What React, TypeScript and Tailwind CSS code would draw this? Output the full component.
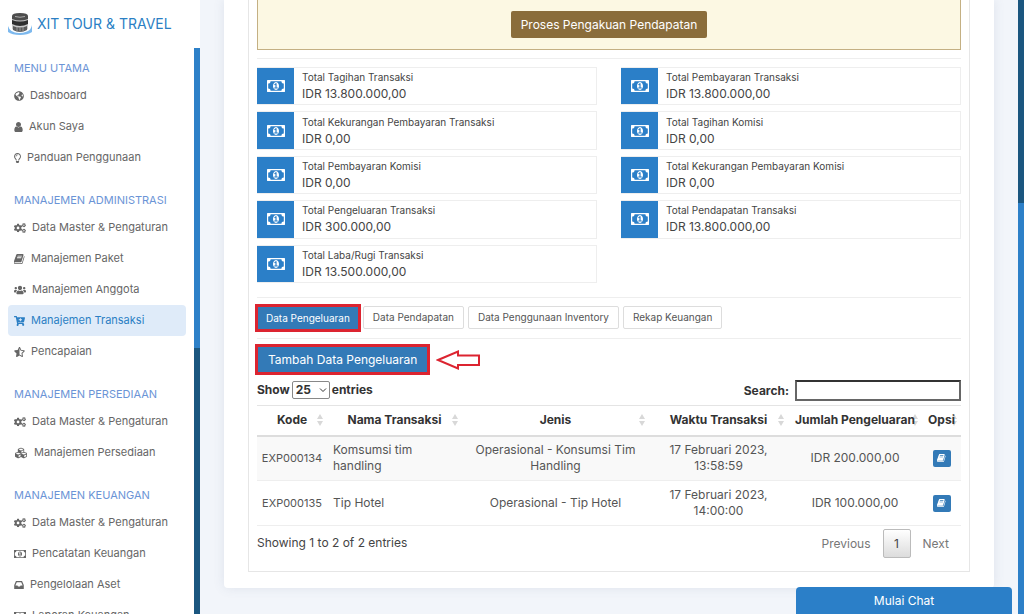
import type { ReactNode } from "react";
import {
  FaCartPlus,
  FaCogs,
  FaCubes,
  FaGlobeAmericas,
  FaRegLightbulb,
  FaStarHalfAlt,
  FaUsers,
} from "react-icons/fa";

function BookIcon({ className }: { className: string }) {
  return (
    <svg viewBox="100 128 1580 1536" fill="currentColor" className={className} aria-hidden="true">
      <path d="M1639 478q40 57 18 129l-275 906q-19 64-76.5 107.5t-122.5 43.5h-923q-77 0-148.5-53.5t-99.5-131.5q-24-67-2-127 0-4 3-27t4-37q1-8-3-21.5t-3-19.5q2-11 8-21t16.5-23.5 16.5-23.5q23-38 45-91.5t30-91.5q3-10 .5-30t-.5-28q3-11 17-28t17-23q21-36 42-92t25-90q1-9-2.500-32t.5-28q4-13 22-30.500t22-22.500q19-26 42.500-84.500t27.500-96.500q1-8-3-25.500t-2-26.500q2-8 9-18t18-23 17-21q8-12 16.500-30.500t15-35 16-36 19.500-32 26.500-23.500 36-11.500 47.500 5.500l-1 3q38-9 51-9h761q74 0 114 56t18 130l-274 906q-36 119-71.500 153.500t-128.500 34.500h-869q-27 0-38 15-11 16-1 43 24 70 144 70h923q29 0 56-15.500t35-41.500l300-987q7-22 5-57 38 15 59 43zm-1064 2q-4 13 2 22.500t20 9.500h608q13 0 25.500-9.500t16.500-22.500l21-64q4-13-2-22.500t-20-9.500h-608q-13 0-25.500 9.500t-16.500 22.500zm-83 256q-4 13 2 22.500t20 9.500h608q13 0 25.500-9.500t16.500-22.500l21-64q4-13-2-22.500t-20-9.500h-608q-13 0-25.500 9.500t-16.500 22.500z" />
    </svg>
  );
}

function UserIcon({ className }: { className: string }) {
  return (
    <svg viewBox="256 128 1280 1536" fill="currentColor" className={className} aria-hidden="true">
      <path d="M1536 1399q0 109-62.5 187t-150.5 78h-854q-88 0-150.5-78t-62.5-187q0-85 8.5-160.5t31.5-152 58.5-131 94-89 134.5-34.5q131 128 313 128t313-128q76 0 134.5 34.5t94 89 58.5 131 31.5 152 8.5 160.5zm-256-887q0 159-112.5 271.5t-271.5 112.5-271.5-112.5-112.5-271.5 112.5-271.5 271.5-112.5 271.5 112.5 112.5 271.5z" />
    </svg>
  );
}

function MoneyIcon({ className }: { className: string }) {
  return (
    <svg viewBox="0 256 1920 1280" fill="currentColor" className={className} aria-hidden="true">
      <path d="M768 1152h384v-96h-128v-448h-114l-148 137 77 80q42-37 55-57h2v288h-128v96zm512-256q0 70-21 142t-59.5 134-101.5 101-138 39-138-39-101.5-101-59.5-134-21-142 21-142 59.5-134 101.5-101 138-39 138 39 101.5 101 59.5 134 21 142zm512 256v-512q-106 0-181-75t-75-181h-1152q0 106-75 181t-181 75v512q106 0 181 75t75 181h1152q0-106 75-181t181-75zm128-832v1152q0 26-19 45t-45 19h-1792q-26 0-45-19t-19-45v-1152q0-26 19-45t45-19h1792q26 0 45 19t19 45z" />
    </svg>
  );
}

function InboxIcon({ className }: { className: string }) {
  return (
    <svg viewBox="128 256 1536 1280" fill="currentColor" className={className} aria-hidden="true">
      <path d="M1151 960h316q-1-3-2.5-8.5t-2.5-7.5l-212-496h-708l-212 496q-1 3-2.5 8.5t-2.5 7.5h316l95 192h320zm513 30v482q0 26-19 45t-45 19h-1408q-26 0-45-19t-19-45v-482q0-62 25-123l238-552q10-25 36.5-42t52.5-17h832q26 0 52.5 17t36.5 42l238 552q25 61 25 123z" />
    </svg>
  );
}

function Logo() {
  return (
    <svg viewBox="0 0 24 24" className="size-6 shrink-0" aria-hidden="true">
      <path d="M0 14v6q4 3 12 3t12-3v-7q-1 5-5 6.500t-8 1.500q-9 0-11-7z" fill="#7db9ee" />
      <path d="M4 4h16v13q-8 5-16 0z" fill="#c9c9c9" />
      <path d="M4 4q0-3 8-3t8 3v3q-8 3-16 0z" fill="#4d4d4d" />
      <path d="M7 4.500q5 1.500 10 0" stroke="#aaa" fill="none" />
      <path d="M4 8q8 3 16 0v4q-8 4-16 0z" fill="#2f2f2f" />
      <path d="M5 14q7 3 14 0v4q-7 4-14 0z" fill="#5c5c5c" />
      <path d="M9 15v4M12 15.500v4M15 15v4" stroke="#aaa" strokeWidth="0.800" />
    </svg>
  );
}

type Item = { label: string; icon: ReactNode; active?: boolean };

const menu: { title: string; items: Item[] }[] = [
  {
    title: "MENU UTAMA",
    items: [
      { label: "Dashboard", icon: <FaGlobeAmericas className="size-2.5" /> },
      { label: "Akun Saya", icon: <UserIcon className="h-2.5 w-[9px]" /> },
      { label: "Panduan Penggunaan", icon: <FaRegLightbulb className="h-2.5 w-[7px]" /> },
    ],
  },
  {
    title: "MANAJEMEN ADMINISTRASI",
    items: [
      { label: "Data Master & Pengaturan", icon: <FaCogs className="size-3" /> },
      { label: "Manajemen Paket", icon: <BookIcon className="h-2.5 w-[11px]" /> },
      { label: "Manajemen Anggota", icon: <FaUsers className="size-3" /> },
      { label: "Manajemen Transaksi", icon: <FaCartPlus className="h-2.5 w-[11px]" />, active: true },
      { label: "Pencapaian", icon: <FaStarHalfAlt className="h-2.5 w-[11px]" /> },
    ],
  },
  {
    title: "MANAJEMEN PERSEDIAAN",
    items: [
      { label: "Data Master & Pengaturan", icon: <FaCogs className="size-3" /> },
      { label: "Manajemen Persediaan", icon: <FaCubes className="h-3 w-3.5" /> },
    ],
  },
  {
    title: "MANAJEMEN KEUANGAN",
    items: [
      { label: "Data Master & Pengaturan", icon: <FaCogs className="size-3" /> },
      { label: "Pencatatan Keuangan", icon: <MoneyIcon className="h-2 w-3" /> },
      { label: "Pengelolaan Aset", icon: <InboxIcon className="h-2 w-2.5" /> },
      { label: "Laporan Keuangan", icon: <MoneyIcon className="h-2 w-3" /> },
    ],
  },
];

const totals = [
  ["Total Tagihan Transaksi", "IDR 13.800.000,00"],
  ["Total Pembayaran Transaksi", "IDR 13.800.000,00"],
  ["Total Kekurangan Pembayaran Transaksi", "IDR 0,00"],
  ["Total Tagihan Komisi", "IDR 0,00"],
  ["Total Pembayaran Komisi", "IDR 0,00"],
  ["Total Kekurangan Pembayaran Komisi", "IDR 0,00"],
  ["Total Pengeluaran Transaksi", "IDR 300.000,00"],
  ["Total Pendapatan Transaksi", "IDR 13.800.000,00"],
  ["Total Laba/Rugi Transaksi", "IDR 13.500.000,00"],
];

const columns = [
  { label: "Kode", width: "w-[70px]" },
  { label: "Nama Transaksi", width: "w-[135px]" },
  { label: "Jenis", width: "" },
  { label: "Waktu Transaksi", width: "w-[139px]" },
  { label: "Jumlah Pengeluaran", width: "w-[134px]" },
  { label: "Opsi", width: "w-[39px]" },
];

const rows = [
  ["EXP000134", "Komsumsi tim handling", "Operasional - Konsumsi Tim Handling", "17 Februari 2023, 13:58:59", "IDR 200.000,00"],
  ["EXP000135", "Tip Hotel", "Operasional - Tip Hotel", "17 Februari 2023, 14:00:00", "IDR 100.000,00"],
];

function SortIcon() {
  return (
    <svg viewBox="0 0 6 12" className="absolute top-2 right-1 h-3 w-1.5" fill="#d8d8d8" aria-hidden="true">
      <path d="M3 0l3 5H0zM3 12l3-5H0z" />
    </svg>
  );
}

function Sidebar() {
  return (
    <aside className="flex h-full w-50 shrink-0 flex-col overflow-hidden bg-white">
      <a href="#" className="flex h-12 shrink-0 items-center gap-[5px] px-2 text-sm whitespace-nowrap text-[#2b7fc4]">
        <Logo />
        XIT TOUR & TRAVEL
      </a>
      <div className="flex min-h-0 flex-1">
        <nav className="min-w-0 flex-1 overflow-hidden px-2 pt-2 text-[11px] whitespace-nowrap text-[#666]">
          {menu.map((group) => (
            <section key={group.title} className="mb-[15px]">
              <h2 className="h-6 px-1.5 leading-6 text-[#6b94d6]">{group.title}</h2>
              {group.items.map((item) => (
                <a
                  key={item.label}
                  href="#"
                  className={
                    item.active
                      ? "flex h-[31px] items-center gap-1.5 rounded bg-[#dfebf9] px-1.5 text-[#2b7fc4]"
                      : "flex h-[31px] items-center gap-1.5 px-1.5"
                  }
                >
                  {item.icon}
                  {item.label}
                </a>
              ))}
            </section>
          ))}
        </nav>
        <div className="flex w-1.5 flex-col bg-[#1b567f]">
          <div className="h-[53%] bg-[#2d80c8]" />
        </div>
      </div>
    </aside>
  );
}

function DataTable() {
  return (
    <table className="w-full table-fixed border-collapse border-y border-[#e4e4e4] text-xs text-[#555]">
      <thead>
        <tr className="h-[30px] border-b-2 border-[#ddd] text-[#333]">
          {columns.map((c) => (
            <th key={c.label} scope="col" className={`relative p-0 font-bold whitespace-nowrap ${c.width}`}>
              <SortIcon />
              <span className="relative">{c.label}</span>
            </th>
          ))}
        </tr>
      </thead>
      <tbody>
        {rows.map(([kode, nama, jenis, waktu, jumlah]) => (
          <tr key={kode} className="h-[45px] border-b border-[#eee] text-center leading-4 odd:bg-[#f9f9f9]">
            <td className="text-[11px]">{kode}</td>
            <td className="pr-8 pl-1.5 text-left">{nama}</td>
            <td className="px-2">{jenis}</td>
            <td className="px-4">{waktu}</td>
            <td>{jumlah}</td>
            <td>
              <button type="button" aria-label={`Detail ${kode}`} className="inline-flex h-[17px] w-[18px] items-center justify-center rounded-xs bg-[#337ab7] align-middle text-white">
                <BookIcon className="h-2 w-[9px]" />
              </button>
            </td>
          </tr>
        ))}
      </tbody>
    </table>
  );
}

const tabClass = "h-[23px] rounded-xs border border-[#ddd] bg-white px-[9px] text-[10px] text-[#555]";

export default function App() {
  return (
    <div className="relative flex h-screen overflow-hidden bg-[#f2f5fa] font-['Inter',sans-serif] text-[#444]">
      <Sidebar />
      <main className="min-w-0 flex-1 overflow-hidden px-6">
        <div className="rounded-b bg-white px-6 pb-4 shadow-[0_0_12px_rgba(80,100,130,0.12)]">
          <div className="border-x border-b border-[#e6e6e6] px-2">
            <div className="flex justify-center border-x border-b border-[#c4b083] bg-[#fcf8e3] pt-[11px] pb-[11px]">
              <button type="button" className="h-[27px] rounded-xs bg-[#8a6d3b] px-2.5 text-xs text-white">
                Proses Pengakuan Pendapatan
              </button>
            </div>
            <hr className="mt-2 border-[#eee]" />
            <section className="mt-2 grid h-54 grid-cols-2 grid-rows-5 gap-x-6 gap-y-1.5">
              {totals.map(([label, value]) => (
                <div key={label} className="flex border border-l-0 border-[#eee]">
                  <div className="flex w-[37px] shrink-0 items-center justify-center bg-[#2b7fc8] text-white">
                    <MoneyIcon className="h-3 w-[18px]" />
                  </div>
                  <div className="flex flex-col justify-center px-2">
                    <div className="text-[10px] leading-[15px]">{label}</div>
                    <div className="text-xs leading-[17px]">{value}</div>
                  </div>
                </div>
              ))}
            </section>
            <hr className="mt-3.5 border-[#eee]" />
            <div className="my-2 flex gap-1">
              <button type="button" className="h-6 bg-[#337ab7] px-[9px] text-[10px] text-white outline-3 -outline-offset-1 outline-[#dc2430]">
                Data Pengeluaran
              </button>
              <button type="button" className={tabClass}>Data Pendapatan</button>
              <button type="button" className={tabClass}>Data Penggunaan Inventory</button>
              <button type="button" className={tabClass}>Rekap Keuangan</button>
            </div>
            <hr className="border-[#eee]" />
            <div className="mt-[7px] flex items-center gap-2">
              <button type="button" className="h-[27px] bg-[#337ab7] px-[11px] text-xs text-white outline-3 -outline-offset-1 outline-[#dc2430]">
                Tambah Data Pengeluaran
              </button>
              <svg viewBox="0 0 44 20" className="h-5 w-11" fill="#fff" stroke="#dc2430" strokeWidth="2" aria-hidden="true">
                <path d="M2 10L22 1.500V5.500H43V15H22V18.500z" />
              </svg>
            </div>
            <div className="mt-[7px] flex items-end justify-between text-xs font-bold text-[#333]">
              <div className="flex items-center gap-0.5 pb-0.5">
                <label htmlFor="page-size">Show</label>
                <div className="relative">
                  <select
                    id="page-size"
                    defaultValue="25"
                    className="block h-[18px] w-[38px] appearance-none rounded-xs border border-[#888] bg-white pl-[3px] leading-4 font-bold"
                  >
                    <option>10</option>
                    <option>25</option>
                    <option>50</option>
                  </select>
                  <svg viewBox="0 0 8 5" className="pointer-events-none absolute top-[7px] right-[3px] h-[5px] w-2" fill="none" stroke="#333" aria-hidden="true">
                    <path d="M1 .5l3 3 3-3" />
                  </svg>
                </div>
                <span>entries</span>
              </div>
              <label className="flex items-center gap-1.5">
                Search:
                <input type="search" className="h-[21px] w-[166px] border-2 border-[#666] border-t-[#333] bg-white px-1 font-normal" />
              </label>
            </div>
            <div className="mt-1">
              <DataTable />
            </div>
            <div className="mt-[3px] mb-[13px] flex items-start justify-between text-xs">
              <p className="leading-7">Showing 1 to 2 of 2 entries</p>
              <div className="flex items-center text-[#777]">
                <button type="button" className="px-3">Previous</button>
                <button type="button" className="h-[29px] w-7 rounded-xs border border-[#bbb] bg-linear-to-b from-white to-[#dcdcdc] text-[#444]">
                  1
                </button>
                <button type="button" className="px-3">Next</button>
              </div>
            </div>
          </div>
        </div>
      </main>
      <div className="flex w-1.5 shrink-0 flex-col bg-[#2d80c8]">
        <div className="h-[33%] bg-[#1b567f]" />
      </div>
      <button type="button" className="absolute right-3 bottom-0 h-[27px] w-54 rounded-t bg-[#2b7fc8] text-xs text-white">
        Mulai Chat
      </button>
    </div>
  );
}
